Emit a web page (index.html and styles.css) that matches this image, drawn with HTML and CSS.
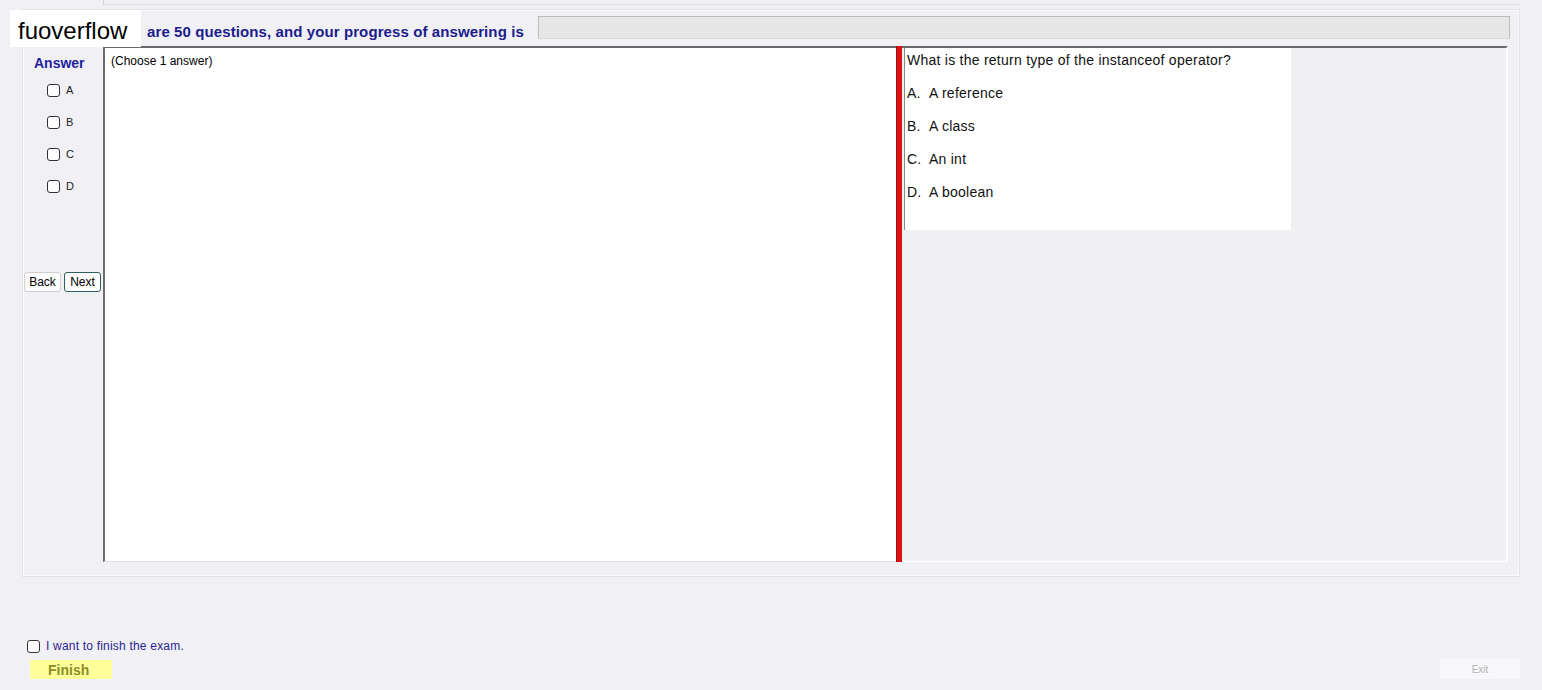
FILE: index.html
```html
<!DOCTYPE html>
<html lang="en">
<head>
    <meta charset="UTF-8">
    <meta name="viewport" content="width=device-width, initial-scale=1.0">
    <title>Exam</title>
    <link rel="stylesheet" href="styles.css">
</head>
<body>

    <div class="tabs">
        <div class="tab"></div>
        <div class="tab-line"></div>
    </div>

    <div class="exam">
        <div class="header">
            <span class="header-text">are 50 questions, and your progress of answering is</span>
            <div class="progress"></div>
        </div>

        <div class="main">
            <div class="answers">
                <div class="answers-title">Answer</div>
                <label class="option"><input type="checkbox" class="box"> A</label>
                <label class="option"><input type="checkbox" class="box"> B</label>
                <label class="option"><input type="checkbox" class="box"> C</label>
                <label class="option"><input type="checkbox" class="box"> D</label>
                <div class="nav">
                    <button class="nav-btn">Back</button>
                    <button class="nav-btn focused">Next</button>
                </div>
            </div>

            <div class="question-box">(Choose 1 answer)</div>

            <div class="splitter"></div>

            <div class="right">
                <div class="qcard">
                    <p class="qline">What is the return type of the instanceof operator?</p>
                    <p class="qline"><span class="letter">A.</span>A reference</p>
                    <p class="qline"><span class="letter">B.</span>A class</p>
                    <p class="qline"><span class="letter">C.</span>An int</p>
                    <p class="qline"><span class="letter">D.</span>A boolean</p>
                </div>
            </div>
        </div>
    </div>

    <div class="footer">
        <div class="finish-block">
            <label class="finish-check"><input type="checkbox" class="box"> I want to finish the exam.</label>
            <button class="finish-btn">Finish</button>
        </div>
        <button class="exit-btn">Exit</button>
    </div>

    <div class="watermark">fuoverflow</div>

</body>
</html>
```

FILE: styles.css
```css
body {
    margin: 0;
    width: 1542px;
    height: 690px;
    overflow: hidden;
    position: relative;
    background-color: #f0f0f5;
    font-family: "Liberation Sans", Arial, sans-serif;
    color: #000;
}

.tabs {
    display: flex;
    height: 5px;
}

.tab {
    width: 95px;
    margin-left: 8px;
    border-right: 1px solid #d0d0d6;
}

.tab-line {
    flex: 1;
    margin-right: 22px;
    border-bottom: 1px solid #dcdce2;
}

.exam {
    margin: 4px 22px 0 22px;
    height: 566px;
    border: 1px solid #e2e2e8;
    box-shadow: inset 0 0 0 1px #fafafc;
}

.header {
    display: flex;
    align-items: flex-start;
    height: 23px;
    margin-top: 6px;
    padding-left: 124px;
}

.header-text {
    margin-top: 7px;
    font-size: 15px;
    line-height: 17px;
    font-weight: bold;
    letter-spacing: 0.1px;
    color: #1c1c8c;
    white-space: nowrap;
}

.progress {
    flex: 1;
    height: 21px;
    margin: 0 9px 0 14px;
    background-color: #e6e6e6;
    border: 1px solid #bcbcbc;
    border-bottom-color: #d8d8d8;
}

.main {
    display: flex;
    height: 516px;
    margin-top: 7px;
    margin-left: 1px;
}

.answers {
    width: 79px;
    display: flex;
    flex-direction: column;
    padding-top: 9px;
}

.answers-title {
    font-size: 14px;
    font-weight: bold;
    color: #1f1fa0;
    line-height: 16px;
    padding-left: 10px;
    margin-bottom: 3px;
}

.option {
    display: flex;
    align-items: center;
    height: 32px;
    padding-left: 23px;
    font-size: 11px;
    color: #222;
}

.box {
    appearance: none;
    -webkit-appearance: none;
    width: 13px;
    height: 13px;
    margin: 0 6px 0 0;
    border: 1px solid #333;
    border-radius: 3px;
    background-color: #fff;
}

.nav {
    display: flex;
    gap: 3px;
    margin-top: 70px;
}

.nav-btn {
    width: 37px;
    height: 20px;
    padding: 0;
    font-family: "Liberation Sans", Arial, sans-serif;
    font-size: 12px;
    color: #000;
    background-color: #fdfdfd;
    border: 1px solid #d0d0d0;
    border-radius: 3px;
}

.nav-btn.focused {
    border-color: #2f5f5f;
}

.question-box {
    width: 785px;
    padding: 6px 0 0 6px;
    background-color: #fff;
    border-left: 2px solid #6a6a6a;
    border-top: 2px solid #6a6a6a;
    border-bottom: 1px solid #e0e0e0;
    font-size: 12px;
    line-height: 14px;
}

.splitter {
    width: 5px;
    height: 516px;
    background-color: #dd1111;
    border-left: 1px solid #9a1010;
}

.right {
    width: 604px;
    background-color: #f0f0f2;
    border-top: 2px solid #6a6a6a;
    border-bottom: 1px solid #fff;
    border-right: 2px solid #fff;
}

.qcard {
    width: 384px;
    height: 178px;
    margin-left: 2px;
    padding: 4px 0 0 2px;
    background-color: #fff;
    border-left: 1px solid #8a8a8a;
}

.qline {
    margin: 0 0 16px 0;
    font-size: 14px;
    line-height: 17px;
    letter-spacing: 0.25px;
    color: #111;
}

.letter {
    display: inline-block;
    width: 22px;
}

.footer {
    display: flex;
    justify-content: space-between;
    align-items: flex-end;
    margin-top: 61px;
    padding: 0 22px 0 27px;
}

.finish-block {
    display: flex;
    flex-direction: column;
}

.finish-check {
    display: flex;
    align-items: center;
    font-size: 12px;
    letter-spacing: 0.2px;
    color: #2b1f8f;
    height: 16px;
}

.finish-check .box {
    margin-right: 6px;
}

.finish-btn {
    width: 82px;
    height: 19px;
    margin: 6px 0 0 3px;
    padding: 0 0 0 18px;
    text-align: left;
    font-family: "Liberation Sans", Arial, sans-serif;
    font-size: 14px;
    font-weight: bold;
    color: #8c8c28;
    border: none;
    background-color: #ffff99;
    box-shadow: 40px 0 40px -20px #f4f4e8;
}

.exit-btn {
    width: 80px;
    height: 20px;
    margin-bottom: 0;
    padding: 0;
    font-family: "Liberation Sans", Arial, sans-serif;
    font-size: 10px;
    color: #b0b0b0;
    background-color: #f8f8fc;
    border: none;
}

.watermark {
    position: absolute;
    left: 10px;
    top: 10px;
    width: 131px;
    height: 37px;
    background-color: #fff;
    font-size: 24px;
    line-height: 42px;
    padding-left: 8px;
    box-sizing: border-box;
    color: #000;
}
```
